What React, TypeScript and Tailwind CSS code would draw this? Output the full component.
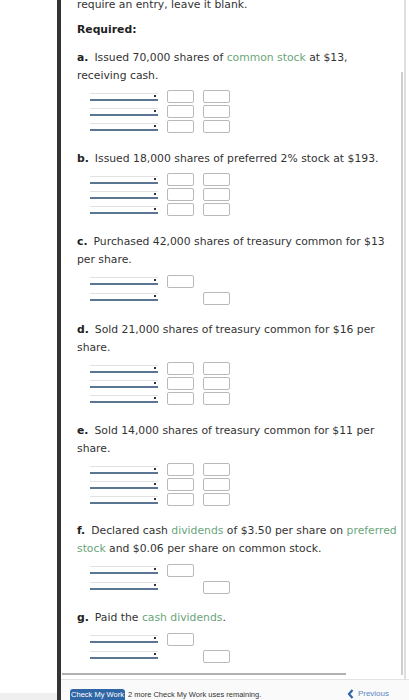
import React from "react";

type Part = string | { g: string };
type Row = "full" | "debit" | "credit";
interface Section {
  letter: string;
  lines: Part[][];
  rows: Row[];
  gap?: string;
}

const sections: Section[] = [
  {
    letter: "a.",
    lines: [["Issued 70,000 shares of ", { g: "common stock" }, " at $13,"], ["receiving cash."]],
    rows: ["full", "full", "full"],
  },
  {
    letter: "b.",
    lines: [["Issued 18,000 shares of preferred 2% stock at $193."]],
    rows: ["full", "full", "full"],
  },
  {
    letter: "c.",
    lines: [["Purchased 42,000 shares of treasury common for $13"], ["per share."]],
    rows: ["debit", "credit"],
  },
  {
    letter: "d.",
    lines: [["Sold 21,000 shares of treasury common for $16 per"], ["share."]],
    rows: ["full", "full", "full"],
  },
  {
    letter: "e.",
    lines: [["Sold 14,000 shares of treasury common for $11 per"], ["share."]],
    rows: ["full", "full", "full"],
  },
  {
    letter: "f.",
    lines: [
      ["Declared cash ", { g: "dividends" }, " of $3.50 per share on ", { g: "preferred" }],
      [{ g: "stock" }, " and $0.06 per share on common stock."],
    ],
    rows: ["debit", "credit"],
    gap: "mt-[15px]",
  },
  {
    letter: "g.",
    lines: [["Paid the ", { g: "cash dividends" }, "."]],
    rows: ["debit", "credit"],
    gap: "mt-[15px]",
  },
];

function Dropdown() {
  return (
    <div className="relative h-[8px] w-[68px] shrink-0 border-t border-[#e2e2e2] border-b-2 border-b-[#5b7690]">
      <div className="absolute right-[2px] top-[1px] h-[2px] w-[2px] bg-[#333]" />
    </div>
  );
}

function Box({ hidden }: { hidden?: boolean }) {
  return (
    <div
      className={
        hidden
          ? "h-[13px] w-[27px]"
          : "h-[13px] w-[27px] rounded-[2px] border border-[#b9b9b9] bg-white"
      }
    />
  );
}

function EntryRow({ kind, tall }: { kind: Row; tall: boolean }) {
  return (
    <div className={tall ? "flex h-[16px] items-center" : "flex h-[15px] items-center"}>
      <Dropdown />
      <div className="ml-[9px]">
        <Box hidden={kind === "credit"} />
      </div>
      <div className={kind === "credit" ? "ml-[9px] mt-[3px]" : "ml-[9px]"}>
        <Box hidden={kind === "debit"} />
      </div>
    </div>
  );
}

function Text({ parts }: { parts: Part[] }) {
  return (
    <>
      {parts.map((p, i) =>
        typeof p === "string" ? (
          <span key={i}>{p}</span>
        ) : (
          <span key={i} className="text-[#6aa57a]">
            {p.g}
          </span>
        )
      )}
    </>
  );
}

function SectionView({ s }: { s: Section }) {
  const tall = s.rows.length === 2;
  return (
    <div className={s.gap ?? "mt-[16px]"}>
      <div className="whitespace-nowrap">
        {s.lines.map((line, i) => (
          <div key={i} className="h-[18px]">
            {i === 0 && <span className="mr-[6px] font-bold text-[#222]">{s.letter}</span>}
            <Text parts={line} />
          </div>
        ))}
      </div>
      <div className="mt-[4px] pl-[13px]">
        {s.rows.map((r, i) => (
          <EntryRow key={i} kind={r} tall={tall} />
        ))}
      </div>
    </div>
  );
}

export default function App() {
  return (
    <div className="flex h-[700px] w-[409px] overflow-hidden bg-white font-['DejaVu_Sans',_Verdana,_sans-serif] text-[10.8px] leading-[18px] text-[#333]">
      <div className="flex w-[57px] shrink-0 flex-col justify-end">
        <div className="h-[7px] bg-[#efefef]" />
      </div>
      <div className="w-[4px] shrink-0 bg-[#343434]" />
      <div className="flex min-w-0 flex-1 flex-col">
        <div className="flex h-[679px] shrink-0">
          <div className="flex min-w-0 flex-1 flex-col overflow-hidden">
            <div className="-mt-[4px] pl-[16px]">
              <div className="h-[18px] whitespace-nowrap">require an entry, leave it blank.</div>
              <div className="mt-[7px] h-[18px] font-bold text-[#222]">Required:</div>
              <div className="-mt-[6px]">
                {sections.map((s) => (
                  <SectionView key={s.letter} s={s} />
                ))}
              </div>
            </div>
            <div className="mt-auto mb-[4px] ml-[1px] h-[2px] w-[284px] shrink-0 bg-[#b0b0b0]" />
          </div>
          <div className="flex w-[6px] shrink-0">
            <div className="flex w-[4px] flex-col">
              <div className="h-[72px]" />
              <div className="ml-[1px] w-[2px] flex-1 bg-[#cfcfcf]" />
              <div className="h-[4px]" />
            </div>
            <div className="w-[2px] bg-[#dedede]" />
          </div>
          <div className="w-[3px] shrink-0" />
        </div>
        <div className="flex h-[21px] shrink-0 items-end border-t border-[#e3e3e3] bg-[#fafafa] pl-[9px] pr-[20px] font-['Liberation_Sans',_Arial,_sans-serif]">
          <div className="flex flex-1 items-end">
            <div className="h-[11px] w-[55px] shrink-0 whitespace-nowrap rounded-t-[3px] bg-[#2f66a6] text-center text-[7.5px] leading-[11px] text-white">
              Check My Work
            </div>
            <div className="ml-[3px] h-[11px] whitespace-nowrap text-[7.5px] leading-[11px] text-[#333]">
              2 more Check My Work uses remaining.
            </div>
          </div>
          <div className="mb-[1px] flex h-[11px] items-center">
            <svg width="7" height="10" viewBox="0 0 7 10" className="mr-[4px]">
              <path d="M5.5 1 L2 5 L5.5 9" stroke="#2f66a6" strokeWidth="2.2" fill="none" />
            </svg>
            <span className="text-[8px] leading-[11px] text-[#5a86c0]">Previous</span>
          </div>
        </div>
      </div>
    </div>
  );
}
